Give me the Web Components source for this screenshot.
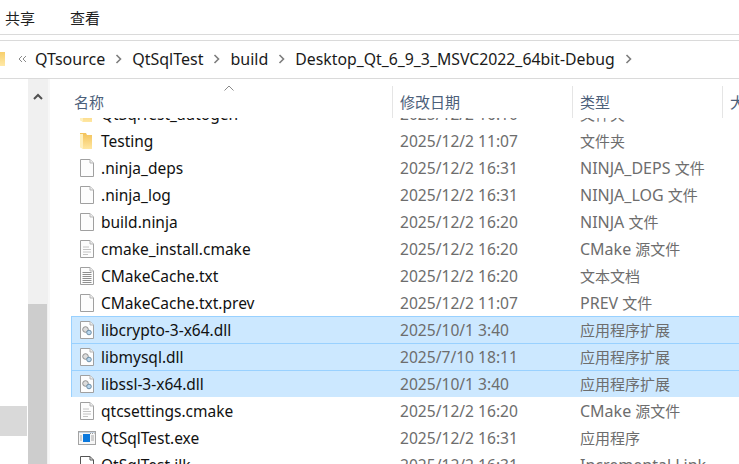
<!DOCTYPE html>
<html>
<head>
<meta charset="utf-8">
<title>build</title>
<style>
  html, body { margin: 0; height: 100%; overflow: hidden; background: #fff; }
  body { font: 16px "Noto Sans", "Noto Sans CJK SC", sans-serif; color: #111; }
</style>
</head>
<body>
<x-explorer>
  <x-ribbon slot="ribbon"><span>共享</span><span>查看</span></x-ribbon>
  <x-address slot="address">
    <x-crumb>QTsource</x-crumb><x-crumb>QtSqlTest</x-crumb><x-crumb>build</x-crumb><x-crumb style="font-size:15.8px">Desktop_Qt_6_9_3_MSVC2022_64bit-Debug</x-crumb>
  </x-address>
  <x-nav slot="nav"></x-nav>
  <x-list-header slot="header"></x-list-header>
  <x-file-row slot="rows" icon="folder" name="QtSqlTest_autogen" date="2025/12/2 16:10" type="文件夹"></x-file-row>
  <x-file-row slot="rows" icon="folder" name="Testing" date="2025/12/2 11:07" type="文件夹"></x-file-row>
  <x-file-row slot="rows" icon="blank" name=".ninja_deps" date="2025/12/2 16:31" type="NINJA_DEPS 文件"></x-file-row>
  <x-file-row slot="rows" icon="blank" name=".ninja_log" date="2025/12/2 16:31" type="NINJA_LOG 文件"></x-file-row>
  <x-file-row slot="rows" icon="blank" name="build.ninja" date="2025/12/2 16:20" type="NINJA 文件"></x-file-row>
  <x-file-row slot="rows" icon="source" name="cmake_install.cmake" date="2025/12/2 16:20" type="CMake 源文件"></x-file-row>
  <x-file-row slot="rows" icon="text" name="CMakeCache.txt" date="2025/12/2 16:20" type="文本文档"></x-file-row>
  <x-file-row slot="rows" icon="blank" name="CMakeCache.txt.prev" date="2025/12/2 11:07" type="PREV 文件"></x-file-row>
  <x-file-row slot="rows" icon="dll" selected name="libcrypto-3-x64.dll" date="2025/10/1 3:40" type="应用程序扩展"></x-file-row>
  <x-file-row slot="rows" icon="dll" selected name="libmysql.dll" date="2025/7/10 18:11" type="应用程序扩展"></x-file-row>
  <x-file-row slot="rows" icon="dll" selected name="libssl-3-x64.dll" date="2025/10/1 3:40" type="应用程序扩展"></x-file-row>
  <x-file-row slot="rows" icon="source" name="qtcsettings.cmake" date="2025/12/2 16:20" type="CMake 源文件"></x-file-row>
  <x-file-row slot="rows" icon="exe" name="QtSqlTest.exe" date="2025/12/2 16:31" type="应用程序"></x-file-row>
  <x-file-row slot="rows" icon="ilk" name="QtSqlTest.ilk" date="2025/12/2 16:31" type="Incremental Link"></x-file-row>
</x-explorer>

<script>
const define = (tag, css, markup, setup) => {
  customElements.define(tag, class extends HTMLElement {
    connectedCallback() {
      if (this.shadowRoot) return;
      const root = this.attachShadow({ mode: "open" });
      const html = typeof markup === "function" ? markup(this) : markup;
      root.innerHTML = `<style>${css}</style>${html}`;
      if (setup) setup(this, root);
    }
  });
};

define("x-explorer", `
  :host { display: flex; flex-direction: column; width: 739px; height: 464px; overflow: hidden; }
  .ribbon { height: 34px; border-bottom: 1px solid #dadada; margin-bottom: 5px; }
  .address { height: 37px; border-top: 1px solid #dadada; border-bottom: 1px solid #dadada; }
  .body { flex: 1; display: flex; min-height: 0; }
  .nav { width: 50px; flex: none; }
  .main { flex: 1; min-width: 0; display: flex; flex-direction: column; padding-left: 21px; }
  .view { flex: 1; min-height: 0; overflow: hidden; }
  .scroll { margin-top: -18px; }
`, `
  <div class="ribbon"><slot name="ribbon"></slot></div>
  <div class="address"><slot name="address"></slot></div>
  <div class="body">
    <div class="nav"><slot name="nav"></slot></div>
    <div class="main">
      <slot name="header"></slot>
      <div class="view"><div class="scroll"><slot name="rows"></slot></div></div>
    </div>
  </div>
`);

define("x-ribbon", `
  :host { display: flex; height: 34px; align-items: center; gap: 35px; padding: 0 0 0 5px; font-size: 15px; color: #1f1f1f; }
`, `<slot></slot>`);

define("x-address", `
  :host { display: flex; align-items: center; height: 36px; font-size: 16px; color: #1a1a1a; }
  .folder { width: 5px; height: 14px; background: linear-gradient(#f7cf6c, #ffe9a8); margin-right: 12px; flex: none; }
  .more { width: 18px; flex: none; }
  svg { display: block; }
`, `
  <div class="folder"></div>
  <svg class="more" width="18" height="10" viewBox="0 0 18 10" fill="none" stroke="#8a8a8a" stroke-width="1"><path d="M5 2 2 5l3 3M9 2 6 5l3 3"/></svg>
  <slot></slot>
`);

define("x-crumb", `
  :host { display: inline-flex; align-items: center; white-space: nowrap; }
  span { margin-right: 10px; }
  svg { margin-right: 10px; }
`, `
  <span><slot></slot></span>
  <svg width="7" height="10" viewBox="0 0 7 10" fill="none" stroke="#7d7d7d" stroke-width="1.6"><path d="M1.500 1 5.500 5l-4 4"/></svg>
`);

define("x-nav", `
  :host { display: flex; height: 100%; }
  .pane { width: 28px; flex: none; display: flex; flex-direction: column; padding-top: 327px; box-sizing: border-box; }
  .hit { height: 30px; width: 27px; background: #d9d9d9; }
  .bar { width: 20px; flex: none; background: #f0f0f0; display: flex; flex-direction: column; }
  .arrow { height: 34px; display: flex; align-items: center; justify-content: center; }
  .track { flex: 1; display: flex; flex-direction: column; padding-top: 191px; }
  .thumb { flex: 1; width: 19px; background: #cdcdcd; }
  .edge { width: 2px; background: #f7f7f7; }
`, `
  <div class="pane"><div class="hit"></div></div>
  <div class="bar">
    <div class="arrow"><svg width="10" height="7" viewBox="0 0 10 7" fill="none" stroke="#505050" stroke-width="2"><path d="M1 6 5 2l4 4"/></svg></div>
    <div class="track"><div class="thumb"></div></div>
  </div>
  <div class="edge"></div>
`);

define("x-list-header", `
  :host { display: grid; grid-template-columns: 321px 180px 150px 1fr; height: 32px; margin-top: 7px; font-size: 15px; color: #4c607a; position: relative; }
  div { box-sizing: border-box; line-height: 32px; white-space: nowrap; padding-left: 3px; overflow: hidden; }
  div + div { border-left: 1px solid #e5e5e5; padding-left: 7px; }
  svg { position: absolute; left: 152px; top: -1px; }
`, `
  <div>名称</div><div>修改日期</div><div>类型</div><div>大小</div>
  <svg width="12" height="7" viewBox="0 0 12 7" fill="none" stroke="#8a8a8a" stroke-width="1"><path d="M1.500 5.500 6 1l4.500 4.500"/></svg>
`);

const PAGE = `<path d="M.5 .5h9.500l3.500 3.500v13.500H.5z" fill="#fdfdfd" stroke="#a0a0a0"/><path d="M10 .5v3.500h3.500" fill="#efefef" stroke="#b5b5b5"/>`;
const ICONS = {
  folder: `<svg width="13" height="16" viewBox="0 0 13 16"><defs><linearGradient id="f" x1="0" y1="0" x2="0" y2="1"><stop offset="0" stop-color="#f3c25a"/><stop offset="1" stop-color="#ffe7a2"/></linearGradient></defs><path d="M0 0h6l1 2h5v14H3L0 14z" fill="url(#f)"/><path d="M0 1h3v15L0 14z" fill="#fff0bd"/></svg>`,
  blank: `<svg width="14" height="18" viewBox="0 0 14 18">${PAGE}</svg>`,
  source: `<svg width="14" height="18" viewBox="0 0 14 18">${PAGE}<path d="M3 7h6M3 9.500h8M3 12h8M3 14.500h5" stroke="#c4c4c4"/></svg>`,
  text: `<svg width="14" height="18" viewBox="0 0 14 18">${PAGE}<path d="M2.500 5.500h9M2.500 7.500h9M2.500 9.500h9M2.500 11.500h9M2.500 13.500h9M2.500 15.500h9" stroke="#8f8f8f"/></svg>`,
  dll: `<svg width="14" height="18" viewBox="0 0 14 18">${PAGE}<circle cx="5.500" cy="8.500" r="2.800" fill="#dcdcdc" stroke="#8f8f8f"/><circle cx="9" cy="11.500" r="2.300" fill="#b9d6ee" stroke="#6d8fa8"/></svg>`,
  exe: `<svg width="18" height="14" viewBox="0 0 18 14"><rect x=".5" y=".5" width="17" height="13" fill="#f6f6f6" stroke="#a3a3a3"/><path d="M1 1.500h16" stroke="#c3d0de"/><path d="M12 2.500h1M14 2.500h1M16 2.500h.5" stroke="#999"/><rect x="5" y="3" width="7" height="8" fill="#0a78dc"/><path d="M13 5h3M13 7h3M13 9h3M2 5h2M2 7h2M2 9h2" stroke="#a8a8a8"/></svg>`,
  ilk: `<svg width="14" height="18" viewBox="0 0 14 18"><path d="M.5 .5h9.500l3.500 3.500v13.500H.5z" fill="#fff" stroke="#555"/><path d="M10 .5v3.500h3.500" fill="none" stroke="#555"/></svg>`,
};

// CJK runs are a size smaller than latin so both match the reference's widths
const typeMarkup = text => text.replace(/[\u4e00-\u9fff]+/g, m => `<span class="cjk">${m}</span>`);

define("x-file-row", `
  :host { display: grid; grid-template-columns: 30px 299px 180px 1fr; align-items: center; height: 27px; box-sizing: border-box; white-space: nowrap; font-size: 15.5px; }
  :host([selected]) { background: #cce8ff; box-shadow: inset 0 1px 0 #99d1ff, inset 1px 0 0 #99d1ff; }
  .icon { display: flex; justify-content: center; padding-left: 1px; }
  .date, .type { color: #6d6d6d; }
  .date { font-size: 15.6px; }
  .type { font-size: 16px; }
  .cjk { font-size: 15px; }
  svg { display: block; }
`, host => `
    <div class="icon">${ICONS[host.getAttribute("icon")]}</div>
    <div>${host.getAttribute("name")}</div>
    <div class="date">${host.getAttribute("date")}</div>
    <div class="type">${typeMarkup(host.getAttribute("type"))}</div>
`);
</script>
</body>
</html>
